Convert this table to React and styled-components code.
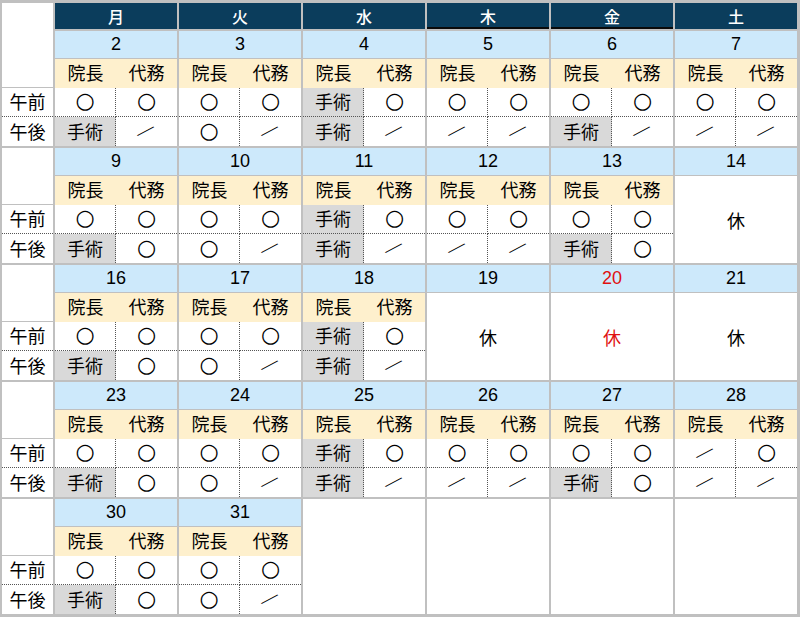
import React from "react";
import styled, { createGlobalStyle, css } from "styled-components";

const Global = createGlobalStyle`
  html, body { margin: 0; padding: 0; background: #ffffff; }
  body { font-family: "Noto Sans CJK JP", "Noto Sans", sans-serif; }
`;

const BORDER = "#c0c0c0";
const CJK = `"Noto Sans CJK JP", "Noto Sans", sans-serif`;
const NUM = `"Liberation Sans", Arial, "Noto Sans CJK JP", sans-serif`;

const Page = styled.div`
  width: 800px;
  height: 617px;
  box-sizing: border-box;
  background: ${BORDER};
  padding: 3px 3px 3px 2px;
  display: grid;
  grid-template-columns: 51px repeat(6, 122px);
  grid-template-rows: 26px repeat(5, 115px);
  gap: 2px;
`;

const Weekday = styled.div`
  background: #0b3d5c;
  color: #ffffff;
  font-family: ${CJK};
  font-size: 16px;
  font-weight: 500;
  display: flex;
  align-items: center;
  justify-content: center;
  ${(p) => p.$mark && css`box-shadow: inset 0 -2px 0 #0a0a0a;`}
`;

const Label = styled.div`
  display: flex;
  flex-direction: column;
  background: ${BORDER};
  ${(p) => p.$first && css`grid-row: 1 / 3;`}
`;

const LabelTop = styled.div`
  flex: 1;
  background: #ffffff;
  margin-bottom: 1px;
`;

const LabelCell = styled.div`
  height: 29px;
  box-sizing: border-box;
  background: #ffffff;
  color: #000;
  font-family: ${CJK};
  font-size: 18px;
  font-weight: 400;
  display: flex;
  align-items: center;
  justify-content: center;
  padding-bottom: 2px;
  ${(p) => p.$am && css`border-bottom: 1px dotted #555;`}
`;

const Day = styled.div`
  display: flex;
  flex-direction: column;
  background: ${BORDER};
`;

const DateBar = styled.div`
  height: 27px;
  flex: none;
  background: #cde9fb;
  color: ${(p) => (p.$red ? "#e01010" : "#000")};
  font-family: ${NUM};
  font-size: 18px;
  display: flex;
  align-items: center;
  justify-content: center;
  margin-bottom: 1px;
`;

const Slots = styled.div`
  flex: 1;
  display: grid;
  grid-template-columns: 61px 61px;
  grid-template-rows: 29px 29px 1fr;
  background: #ffffff;
`;

const Staff = styled.div`
  background: #fef0cd;
  color: #000;
  font-family: ${CJK};
  font-size: 18px;
  font-weight: 400;
  display: flex;
  align-items: center;
  justify-content: center;
  padding-bottom: 3px;
`;

const Slot = styled.div`
  box-sizing: border-box;
  background: ${(p) => (p.$surgery ? "#d9d9d9" : "#ffffff")};
  color: #000;
  font-family: ${CJK};
  font-size: 18px;
  font-weight: 400;
  display: flex;
  align-items: center;
  justify-content: center;
  padding-bottom: 2px;
  ${(p) => p.$left && css`border-right: 1px dotted #555;`}
  ${(p) => p.$am && css`border-bottom: 1px dotted #555;`}
`;

const Circle = styled.span`
  font-family: "DejaVu Sans", sans-serif;
  font-size: 22px;
  font-weight: 400;
  line-height: 1;
  color: #000;
`;

const Slash = styled.span`
  display: inline-block;
  font-family: "DejaVu Sans", sans-serif;
  font-size: 17px;
  font-weight: 400;
  line-height: 1;
  color: #000;
  transform: rotate(18deg) scaleY(0.95);
`;

const Holiday = styled.div`
  flex: 1;
  background: #ffffff;
  color: ${(p) => (p.$red ? "#e01010" : "#000")};
  font-family: ${CJK};
  font-size: 18px;
  font-weight: 400;
  display: flex;
  align-items: center;
  justify-content: center;
`;

const Empty = styled.div`
  background: #ffffff;
`;

const WEEKDAYS = ["月", "火", "水", "木", "金", "土"];

const O = "○", S = "／", X = "手術";
const d = (n, am, pm) => ({ n, am, pm });
const h = (n, red) => ({ n, holiday: true, red });

const WEEKS = [
  [d(2, [O, O], [X, S]), d(3, [O, O], [O, S]), d(4, [X, O], [X, S]), d(5, [O, O], [S, S]), d(6, [O, O], [X, S]), d(7, [O, O], [S, S])],
  [d(9, [O, O], [X, O]), d(10, [O, O], [O, S]), d(11, [X, O], [X, S]), d(12, [O, O], [S, S]), d(13, [O, O], [X, O]), h(14)],
  [d(16, [O, O], [X, O]), d(17, [O, O], [O, S]), d(18, [X, O], [X, S]), h(19), h(20, true), h(21)],
  [d(23, [O, O], [X, O]), d(24, [O, O], [O, S]), d(25, [X, O], [X, S]), d(26, [O, O], [S, S]), d(27, [O, O], [X, O]), d(28, [S, O], [S, S])],
  [d(30, [O, O], [X, O]), d(31, [O, O], [O, S]), null, null, null, null],
];

function Mark({ v }) {
  if (v === O) return <Circle>{O}</Circle>;
  if (v === S) return <Slash>{S}</Slash>;
  return v;
}

function DayCell({ day }) {
  if (!day) return <Empty />;
  return (
    <Day>
      <DateBar $red={day.red}>{day.n}</DateBar>
      {day.holiday ? (
        <Holiday $red={day.red}>休</Holiday>
      ) : (
        <Slots>
          <Staff>院長</Staff>
          <Staff>代務</Staff>
          {day.am.map((v, i) => (
            <Slot key={"a" + i} $am $left={i === 0} $surgery={v === X}>
              <Mark v={v} />
            </Slot>
          ))}
          {day.pm.map((v, i) => (
            <Slot key={"p" + i} $left={i === 0} $surgery={v === X}>
              <Mark v={v} />
            </Slot>
          ))}
        </Slots>
      )}
    </Day>
  );
}

function RowLabel({ first }) {
  return (
    <Label $first={first}>
      <LabelTop />
      <LabelCell $am>午前</LabelCell>
      <LabelCell>午後</LabelCell>
    </Label>
  );
}

export default function App() {
  return (
    <>
      <Global />
      <Page>
        <RowLabel first />
        {WEEKDAYS.map((w) => (
          <Weekday key={w} $mark={w === "木" || w === "金"}>{w}</Weekday>
        ))}
        {WEEKS.map((week, wi) => (
          <React.Fragment key={wi}>
            {wi > 0 && <RowLabel />}
            {week.map((day, di) => (
              <DayCell key={di} day={day} />
            ))}
          </React.Fragment>
        ))}
      </Page>
    </>
  );
}
